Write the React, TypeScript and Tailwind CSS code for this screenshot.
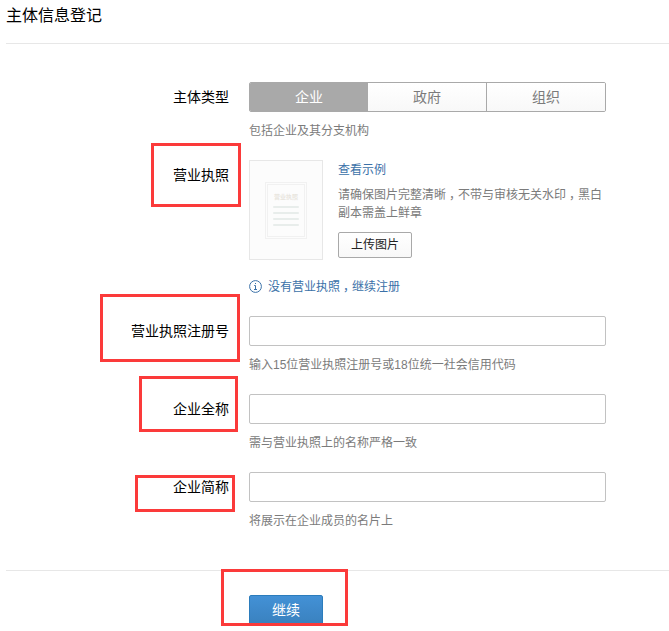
import type { ReactNode } from "react";

const types = ["企业", "政府", "组织"];

function Comma() {
  return <span className="inline-block w-3 pl-[3px] [font-feature-settings:'halt']">，</span>;
}

function Row({ label, children, className = "" }: { label: string; children: ReactNode; className?: string }) {
  return (
    <div className={`flex ${className}`}>
      <div className="w-[229px] shrink-0 text-right text-[14px] leading-[30px] text-black">{label}</div>
      <div className="ml-5 w-[357px] shrink-0">{children}</div>
    </div>
  );
}

function Field({ label, hint }: { label: string; hint: string }) {
  return (
    <Row label={label} className="h-[78px]">
      <input className="block h-[30px] w-full rounded-[2px] border border-[#c2c2c2] bg-white px-2 outline-none" />
      <p className="mt-[10px] text-[12px] leading-[18px] text-[#7b7b7b]">{hint}</p>
    </Row>
  );
}

function LicensePlaceholder() {
  return (
    <div className="flex h-[100px] w-[74px] shrink-0 justify-center border border-[#e7e7e7] bg-[#fcfcfc] pt-[21px]">
      <div className="h-[57px] w-[42px] border border-[#f1f1f1] p-px">
        <div className="flex h-full flex-col items-center border border-[#f1f1f1] pt-[7px]">
          <span className="whitespace-nowrap text-[6px] font-bold leading-[10px] text-[#e9e6df]">营业执照</span>
          <div className="mt-[4px] flex flex-col gap-[4px]">
            <i className="block h-[2px] w-[26px] rounded-full bg-[#e8edeb]" />
            <i className="block h-[2px] w-[26px] rounded-full bg-[#e8edeb]" />
            <i className="block h-[2px] w-[26px] rounded-full bg-[#e8edeb]" />
            <i className="block h-[2px] w-[26px] rounded-full bg-[#e8edeb]" />
          </div>
        </div>
      </div>
    </div>
  );
}

function Mark({ className }: { className: string }) {
  return <div className={`pointer-events-none absolute border-[3px] border-[#fb3a3a] ${className}`} />;
}

export default function App() {
  return (
    <div className="relative h-[631px] w-[669px] overflow-hidden bg-white font-['Liberation_Sans','Noto_Sans_CJK_SC',sans-serif]">
      <header className="ml-[6px] h-[44px] border-b border-[#e7e7e7]">
        <h1 className="text-[16px] leading-[32px] text-black">主体信息登记</h1>
      </header>

      <main className="ml-[6px] h-[527px] border-b border-[#e7e7e7] pt-[38px]">
        <div className="-ml-[6px]">
          <Row label="主体类型" className="h-[78px]">
            <div className="flex h-[30px] overflow-hidden rounded-[2px] border border-[#a9a9a9] text-center text-[14px] leading-[28px]">
              {types.map((t, i) => (
                <button
                  key={t}
                  className={
                    i === 0
                      ? "w-[118px] bg-[#a9a9a9] text-white"
                      : i === 1
                        ? "w-[118px] bg-linear-to-b from-white to-[#f8f8f8] text-[#7b7b7b]"
                        : "w-[119px] border-l border-[#a9a9a9] bg-linear-to-b from-white to-[#f8f8f8] text-[#7b7b7b]"
                  }
                >
                  {t}
                </button>
              ))}
            </div>
            <p className="mt-[10px] text-[12px] leading-[18px] text-[#7b7b7b]">包括企业及其分支机构</p>
          </Row>

          <Row label="营业执照" className="h-[156px]">
            <div className="flex">
              <LicensePlaceholder />
              <div className="ml-[15px] w-[268px] pt-px text-[12px] leading-[18px]">
                <a className="block text-[#3b71a8]">查看示例</a>
                <p className="mt-[7px] text-[#7b7b7b]">
                  请确保图片完整清晰<Comma />不带与审核无关水印<Comma />黑白
                  <br />
                  副本需盖上鲜章
                </p>
                <button className="mt-[10px] block h-[26px] w-[74px] rounded-[2px] border border-[#a9a9a9] bg-linear-to-b from-white to-[#f8f8f8] leading-[24px] text-[#222]">
                  上传图片
                </button>
              </div>
            </div>
            <div className="mt-[18px] flex items-start text-[12px] leading-[18px] text-[#3b71a8]">
              <svg width="13" height="13" viewBox="0 0 13 13" className="mr-[6px] mt-[2px]" fill="none" stroke="currentColor">
                <circle cx="6.5" cy="6.5" r="5.9" />
                <path d="M5.2 5.5H6.5V9.5M5 9.5H8M6 3.5H7" />
              </svg>
              <a>没有营业执照<Comma />继续注册</a>
            </div>
          </Row>

          <Field label="营业执照注册号" hint="输入15位营业执照注册号或18位统一社会信用代码" />
          <Field label="企业全称" hint="需与营业执照上的名称严格一致" />
          <Field label="企业简称" hint="将展示在企业成员的名片上" />
        </div>
      </main>

      <footer className="h-[55px] overflow-hidden pl-[249px] pt-[24px]">
        <button className="block h-[32px] w-[74px] rounded-[2px] border border-[#2b7cbc] bg-linear-to-b from-[#4391d6] to-[#3980bd] pb-[2px] text-[14px] leading-[28px] text-white">
          继续
        </button>
      </footer>

      <Mark className="left-[151px] top-[143px] h-[64px] w-[90px]" />
      <Mark className="left-[100px] top-[294px] h-[68px] w-[140px]" />
      <Mark className="left-[139px] top-[376px] h-[56px] w-[99px]" />
      <Mark className="left-[135px] top-[475px] h-[37px] w-[100px]" />
      <Mark className="left-[221px] top-[569px] h-[57px] w-[127px]" />
    </div>
  );
}
